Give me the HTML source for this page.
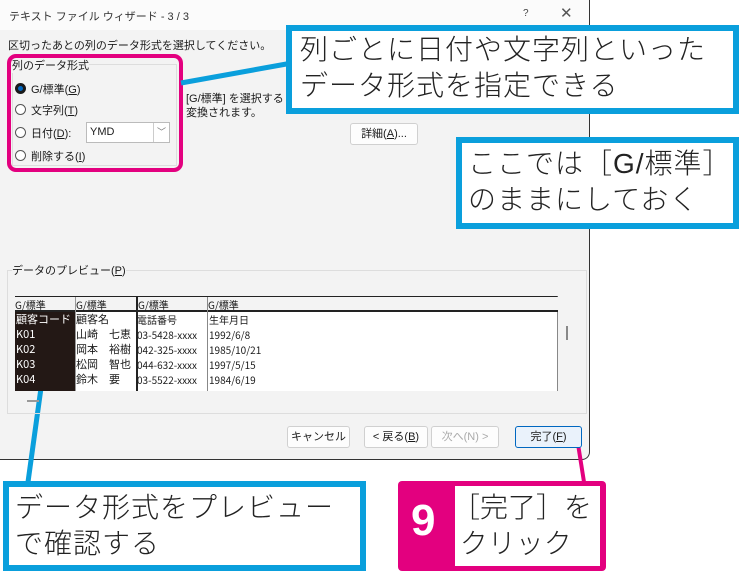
<!DOCTYPE html>
<html><head><meta charset="utf-8"><style>
*{margin:0;padding:0;box-sizing:border-box}
body{width:740px;height:573px;background:#fff;position:relative;overflow:hidden;font-family:"Liberation Sans","Noto Sans CJK JP",sans-serif;color:#1a1a1a}
.a{position:absolute;white-space:nowrap}
.s{font-size:11px}
.win{left:0;top:0;width:590px;height:460px;background:#f3f3f3;border-right:1px solid #333;border-bottom:1px solid #333;border-radius:0 0 8px 0}
.title{left:0;top:0;width:589px;height:30px;background:#fbfbfb}
.radio{width:11px;height:11px;border:1px solid #555;border-radius:50%;background:#fff}
.btn{height:22px;border:1px solid #d0d0d0;background:#fdfdfd;border-radius:3px;font-size:11px;text-align:center;line-height:20px}
.blue{border:6px solid #0a9fdc;background:#fff}
.big{font-size:28px;line-height:36px;color:#222;letter-spacing:1px;font-weight:300}
.mono{font-family:"Noto Sans CJK JP",sans-serif;font-size:11px;line-height:15px}
</style></head><body>
<div class="a win"></div>
<div class="a title"></div>
<div class="a s" style="left:9px;top:8px;font-size:11px;color:#333">テキスト ファイル ウィザード - 3 / 3</div>
<div class="a" style="left:523px;top:8px;font-size:10px;color:#444">?</div>
<div class="a" style="left:560px;top:4px;font-size:15px;color:#555">✕</div>
<div class="a s" style="left:8px;top:37px">区切ったあとの列のデータ形式を選択してください。</div>
<div class="a" style="left:12px;top:64px;width:165px;height:102px;border:1px solid #ddd"></div>
<div class="a s" style="left:12px;top:57px;background:#f3f3f3">列のデータ形式</div>
<div class="a radio" style="left:15px;top:83px;border:3px solid #1a1a1a;background:#0067c0"></div>
<div class="a s" style="left:31px;top:81px">G/標準(<u>G</u>)</div>
<div class="a radio" style="left:15px;top:104px"></div><div class="a s" style="left:31px;top:102px">文字列(<u>T</u>)</div>
<div class="a radio" style="left:15px;top:127px"></div><div class="a s" style="left:31px;top:125px">日付(<u>D</u>):</div>
<div class="a" style="left:86px;top:122px;width:84px;height:21px;background:#fff;border:1px solid #bbb;font-size:11px;line-height:19px;padding-left:3px">YMD<span style="position:absolute;right:0;top:0;width:16px;height:19px;border-left:1px solid #ccc;text-align:center;color:#777;font-size:9px">﹀</span></div>
<div class="a radio" style="left:15px;top:150px"></div><div class="a s" style="left:31px;top:148px">削除する(<u>I</u>)</div>
<div class="a" style="left:7px;top:54px;width:176px;height:118px;border:4px solid #e3007f;border-radius:9px"></div>
<div class="a s" style="left:186px;top:92px;line-height:14px">[G/標準] を選択すると<br>変換されます。</div>
<div class="a btn" style="left:350px;top:123px;width:68px">詳細(<u>A</u>)...</div>
<svg class="a" style="left:0;top:0" width="740" height="573"><line x1="181" y1="83" x2="292" y2="63" stroke="#0a9fdc" stroke-width="5"/><line x1="41" y1="388" x2="28" y2="482" stroke="#0a9fdc" stroke-width="5"/><line x1="578" y1="444" x2="584" y2="482" stroke="#e3007f" stroke-width="4"/></svg>
<div class="a blue" style="left:286px;top:25px;width:453px;height:89px"></div>
<div class="a big" style="left:300px;top:32px">列ごとに日付や文字列といった<br>データ形式を指定できる</div>
<div class="a blue" style="left:456px;top:137px;width:283px;height:92px"></div>
<div class="a big" style="left:468px;top:146px">ここでは［G/標準］<br>のままにしておく</div>
<div class="a" style="left:7px;top:270px;width:580px;height:144px;border:1px solid #ddd"></div>
<div class="a s" style="left:12px;top:262px;background:#f3f3f3">データのプレビュー(<u>P</u>)</div>
<div class="a" style="left:15px;top:296px;width:543px;height:95px;background:#fff;border-top:1px solid #222;border-right:1px solid #888"></div>
<div class="a" style="left:15px;top:297px;width:543px;height:15px;border-bottom:2px solid #222;background:#f3f3f3"></div>
<div class="a" style="left:15px;top:312px;width:60px;height:79px;background:#231815"></div>
<div class="a" style="left:75px;top:297px;width:1px;height:94px;background:#999"></div>
<div class="a" style="left:136px;top:297px;width:2px;height:94px;background:#222"></div>
<div class="a" style="left:207px;top:297px;width:1px;height:94px;background:#888"></div>
<div class="a mono" style="left:15px;top:297px;font-size:10px">G/標準</div>
<div class="a mono" style="left:76px;top:297px;font-size:10px">G/標準</div>
<div class="a mono" style="left:138px;top:297px;font-size:10px">G/標準</div>
<div class="a mono" style="left:208px;top:297px;font-size:10px">G/標準</div>
<div class="a mono" style="left:16px;top:312px;color:#fff">顧客コード<br>K01<br>K02<br>K03<br>K04</div>
<div class="a mono" style="left:76px;top:312px">顧客名<br>山崎　七恵<br>岡本　裕樹<br>松岡　智也<br>鈴木　要</div>
<div class="a mono" style="left:137px;top:312px;font-size:10px;line-height:15px">電話番号<br>03-5428-xxxx<br>042-325-xxxx<br>044-632-xxxx<br>03-5522-xxxx</div>
<div class="a mono" style="left:209px;top:312px;font-size:10px;line-height:15px">生年月日<br>1992/6/8<br>1985/10/21<br>1997/5/15<br>1984/6/19</div>
<div class="a" style="left:566px;top:326px;width:2px;height:14px;background:#888"></div>
<div class="a" style="left:27px;top:400px;width:12px;height:2px;background:#999"></div>
<div class="a btn" style="left:287px;top:426px;width:63px">キャンセル</div>
<div class="a btn" style="left:364px;top:426px;width:64px">&lt; 戻る(<u>B</u>)</div>
<div class="a btn" style="left:431px;top:426px;width:68px;color:#aaa">次へ(N) &gt;</div>
<div class="a btn" style="left:515px;top:426px;width:67px;border:1px solid #0067c0;background:#eaf2fb">完了(<u>F</u>)</div>
<div class="a blue" style="left:3px;top:481px;width:363px;height:90px"></div>
<div class="a big" style="left:15px;top:490px">データ形式をプレビュー<br>で確認する</div>
<div class="a" style="left:398px;top:481px;width:208px;height:90px;background:#e3007f;border-radius:4px"></div>
<div class="a" style="left:455px;top:486px;width:145px;height:80px;background:#fff"></div>
<div class="a" style="left:411px;top:496px;font-size:44px;font-weight:bold;color:#fff">9</div>
<div class="a big" style="left:452px;top:490px;letter-spacing:0">［完了］を<br>&nbsp;クリック</div>
</body></html>
